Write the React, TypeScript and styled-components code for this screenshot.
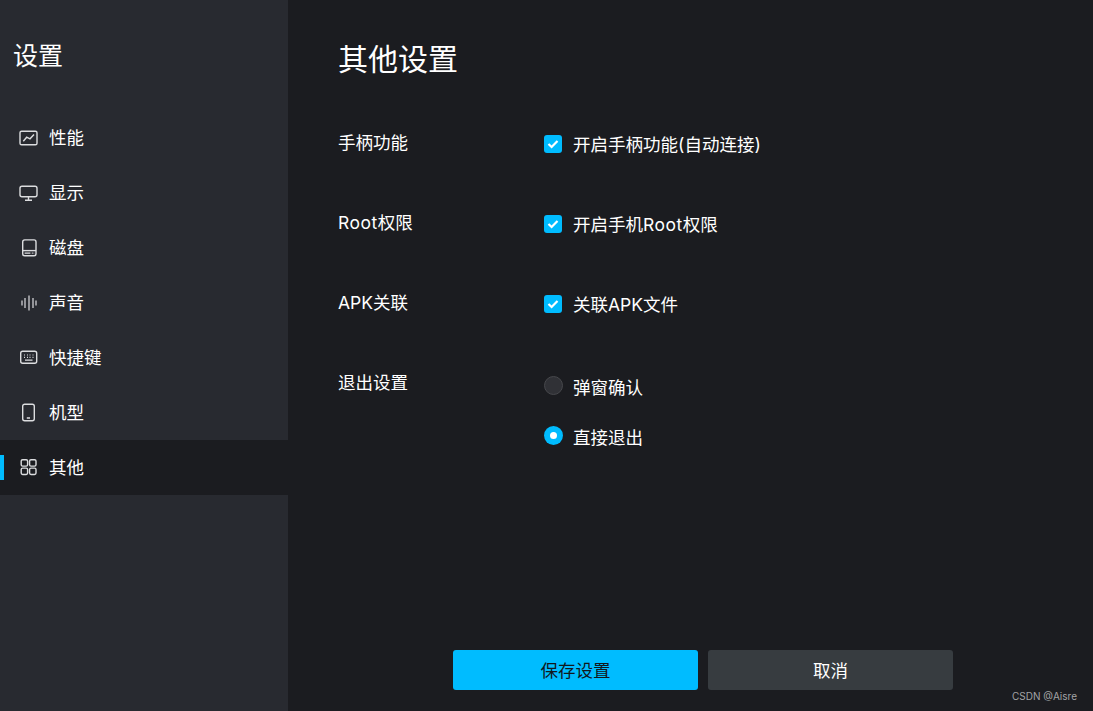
import React from "react";
import styled, { createGlobalStyle } from "styled-components";

const GlobalStyle = createGlobalStyle`
  html, body {
    margin: 0;
    padding: 0;
    height: 100%;
    background: #1b1c20;
  }
  * {
    box-sizing: border-box;
  }
`;

const Page = styled.div`
  position: relative;
  display: flex;
  width: 1093px;
  height: 711px;
  overflow: hidden;
  background: #1b1c20;
  color: #fff;
  font-family: "Inter", "Noto Sans CJK SC", sans-serif;
`;

const Sidebar = styled.aside`
  width: 288px;
  flex-shrink: 0;
  background: #282a30;
`;

const SidebarTitle = styled.h2`
  margin: 0;
  height: 110px;
  padding: 38px 0 0 13px;
  font-size: 25px;
  line-height: 36px;
  font-weight: 400;
`;

const NavItem = styled.div<{ $active?: boolean }>`
  position: relative;
  display: flex;
  align-items: center;
  height: 55px;
  padding-left: 18px;
  gap: 11px;
  font-size: 17.5px;
  background: ${(p) => (p.$active ? "#1b1c20" : "transparent")};

  &::before {
    content: "";
    display: ${(p) => (p.$active ? "block" : "none")};
    position: absolute;
    left: 0;
    top: 15px;
    width: 4px;
    height: 25px;
    background: #00bcff;
  }
`;

const NavLabel = styled.span`
  padding-bottom: 2px;
`;

const NavIcon = styled.svg`
  width: 20px;
  height: 20px;
  flex-shrink: 0;
  fill: none;
  stroke: #dcdddf;
  stroke-width: 1.4;
`;

const Main = styled.main`
  flex: 1;
  display: flex;
  flex-direction: column;
  padding: 0 0 21px 50px;
`;

const Heading = styled.h1`
  margin: 0;
  height: 122px;
  padding-top: 37px;
  font-size: 30px;
  line-height: 44px;
  font-weight: 400;
`;

const Settings = styled.div`
  flex: 1;
  display: flex;
  flex-direction: column;
`;

const Row = styled.div`
  display: grid;
  grid-template-columns: 206px 1fr;
  height: 80px;
`;

const Label = styled.div`
  padding-top: 1px;
  font-size: 17.5px;
  line-height: 40px;
`;

const Latin = styled.span`
  letter-spacing: 0.5px;
`;

const Options = styled.div`
  display: flex;
  flex-direction: column;
  padding-top: 1px;
`;

const Option = styled.div<{ $spaced?: boolean }>`
  display: flex;
  align-items: center;
  gap: 11px;
  height: 40px;
  margin-top: ${(p) => (p.$spaced ? "3px" : "0")};
  margin-bottom: ${(p) => (p.$spaced ? "10px" : "0")};
  font-size: 17.5px;
`;

const CheckBox = styled.span`
  display: flex;
  align-items: center;
  justify-content: center;
  width: 18px;
  height: 18px;
  margin-top: 2px;
  border-radius: 3px;
  background: #00bcff;
`;

const Radio = styled.span<{ $checked?: boolean }>`
  display: flex;
  align-items: center;
  justify-content: center;
  width: 19px;
  height: 19px;
  margin-left: -0.5px;
  margin-right: -0.5px;
  margin-bottom: 1px;
  border-radius: 50%;
  background: ${(p) => (p.$checked ? "#00bcff" : "#303136")};
  border: ${(p) => (p.$checked ? "none" : "1px solid #47484c")};

  &::after {
    content: "";
    display: ${(p) => (p.$checked ? "block" : "none")};
    width: 7px;
    height: 7px;
    border-radius: 50%;
    background: #fff;
  }
`;

const Footer = styled.div`
  display: flex;
  gap: 10px;
  padding-left: 115px;
`;

const Button = styled.button<{ $primary?: boolean }>`
  width: 245px;
  height: 40px;
  border: none;
  border-radius: 3px;
  padding: 0 0 2px;
  font-family: inherit;
  font-size: 17.5px;
  color: ${(p) => (p.$primary ? "#12181c" : "#fff")};
  background: ${(p) => (p.$primary ? "#00bcff" : "#373c40")};
`;

const Watermark = styled.div`
  position: absolute;
  right: 16px;
  bottom: 8px;
  font-family: "Inter", "Liberation Sans", sans-serif;
  font-size: 10px;
  line-height: 14px;
  color: #a3a4a6;
`;

const icons: React.ReactNode[] = [
  <>
    <rect x="2" y="3.2" width="17" height="13.6" rx="1.6" />
    <path d="M5.3 13.2 L8.7 9.2 L12 10.8 L16 6.5" />
  </>,
  <>
    <rect x="2" y="3.2" width="17" height="10.6" rx="2" />
    <path d="M10.5 13.8 V17 M7 17.2 H14" />
  </>,
  <>
    <rect x="4.7" y="1.9" width="13.3" height="15.9" rx="2" />
    <path d="M4.7 12.6 H18" />
    <path d="M6.6 15.2 H12.4 M13.8 15.2 H14.8 M15.6 15.2 H16.2" strokeWidth="1.2" />
  </>,
  <path
    d="M4 7.5 V12.5 M7 5 V15 M11 2.5 V17.5 M15 5 V15 M18 7.5 V12.5"
    strokeWidth="1.2"
  />,
  <>
    <rect x="2.7" y="3.2" width="16" height="12" rx="2" />
    <path
      d="M6 7 H7 M9 7 H10 M11.5 7 H12.5 M14.5 7 H15.5 M6 9.4 H7 M9 9.4 H10 M11.5 9.4 H12.5 M14.5 9.4 H15.5 M7 12.2 H14.5"
      strokeWidth="1.2"
    />
  </>,
  <>
    <rect x="4.7" y="1.2" width="11.6" height="16.6" rx="2" />
    <path d="M8.8 15 H12" strokeWidth="1.5" />
  </>,
  <>
    <rect x="3.2" y="1.7" width="6.4" height="6.4" rx="1.4" />
    <rect x="11.6" y="1.7" width="6.4" height="6.4" rx="1.4" />
    <rect x="3.2" y="10.1" width="6.4" height="6.4" rx="1.4" />
    <rect x="11.6" y="10.1" width="6.4" height="6.4" rx="1.4" />
  </>,
];

const navItems = ["性能", "显示", "磁盘", "声音", "快捷键", "机型", "其他"];

const Check = () => (
  <svg width="12" height="10" viewBox="0 0 12 10" fill="none">
    <path d="M1.5 5 L4.6 8 L10.5 2" stroke="#fff" strokeWidth="2.2" />
  </svg>
);

const App: React.FC = () => {
  return (
    <>
      <GlobalStyle />
      <Page>
        <Sidebar>
          <SidebarTitle>设置</SidebarTitle>
          {navItems.map((name, i) => (
            <NavItem key={name} $active={name === "其他"}>
              <NavIcon viewBox="0 0 20 20">{icons[i]}</NavIcon>
              <NavLabel>{name}</NavLabel>
            </NavItem>
          ))}
        </Sidebar>
        <Main>
          <Heading>其他设置</Heading>
          <Settings>
            <Row>
              <Label>手柄功能</Label>
              <Options>
                <Option>
                  <CheckBox><Check /></CheckBox>
                  开启手柄功能(自动连接)
                </Option>
              </Options>
            </Row>
            <Row>
              <Label><Latin>Root</Latin>权限</Label>
              <Options>
                <Option>
                  <CheckBox><Check /></CheckBox>
                  <span>开启手机<Latin>Root</Latin>权限</span>
                </Option>
              </Options>
            </Row>
            <Row>
              <Label>APK关联</Label>
              <Options>
                <Option>
                  <CheckBox><Check /></CheckBox>
                  关联APK文件
                </Option>
              </Options>
            </Row>
            <Row>
              <Label>退出设置</Label>
              <Options>
                <Option $spaced>
                  <Radio />
                  弹窗确认
                </Option>
                <Option>
                  <Radio $checked />
                  直接退出
                </Option>
              </Options>
            </Row>
          </Settings>
          <Footer>
            <Button $primary>保存设置</Button>
            <Button>取消</Button>
          </Footer>
        </Main>
        <Watermark>CSDN @Aisre</Watermark>
      </Page>
    </>
  );
};

export default App;
